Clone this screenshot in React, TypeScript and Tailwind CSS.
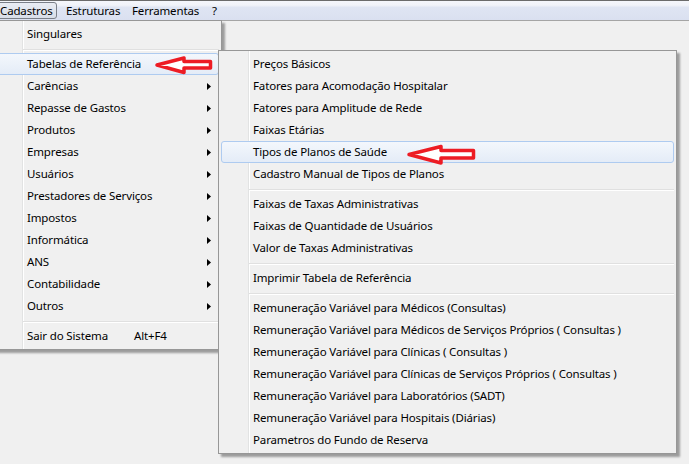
import React from 'react';

type Item = { label?: string; sep?: boolean; sub?: boolean; shortcut?: string; hi?: boolean };

const mainItems: Item[] = [
  { label: 'Singulares' },
  { sep: true },
  { label: 'Tabelas de Referência', sub: true, hi: true },
  { label: 'Carências', sub: true },
  { label: 'Repasse de Gastos', sub: true },
  { label: 'Produtos', sub: true },
  { label: 'Empresas', sub: true },
  { label: 'Usuários', sub: true },
  { label: 'Prestadores de Serviços', sub: true },
  { label: 'Impostos', sub: true },
  { label: 'Informática', sub: true },
  { label: 'ANS', sub: true },
  { label: 'Contabilidade', sub: true },
  { label: 'Outros', sub: true },
  { sep: true },
  { label: 'Sair do Sistema', shortcut: 'Alt+F4' },
];

const subItems: Item[] = [
  { label: 'Preços Básicos' },
  { label: 'Fatores para Acomodação Hospitalar' },
  { label: 'Fatores para Amplitude de Rede' },
  { label: 'Faixas Etárias' },
  { label: 'Tipos de Planos de Saúde', hi: true },
  { label: 'Cadastro Manual de Tipos de Planos' },
  { sep: true },
  { label: 'Faixas de Taxas Administrativas' },
  { label: 'Faixas de Quantidade de Usuários' },
  { label: 'Valor de Taxas Administrativas' },
  { sep: true },
  { label: 'Imprimir Tabela de Referência' },
  { sep: true },
  { label: 'Remuneração Variável para Médicos (Consultas)' },
  { label: 'Remuneração Variável para Médicos de Serviços Próprios ( Consultas )' },
  { label: 'Remuneração Variável para Clínicas ( Consultas )' },
  { label: 'Remuneração Variável para Clínicas de Serviços Próprios ( Consultas )' },
  { label: 'Remuneração Variável para Laboratórios (SADT)' },
  { label: 'Remuneração Variável para Hospitais (Diárias)' },
  { label: 'Parametros do Fundo de Reserva' },
];

function Row({ item }: { item: Item }) {
  if (item.sep) {
    return (
      <div className="h-[8px] pl-[28px] pt-[4px]">
        <div className="h-[1px] bg-[#e0e0e0]" />
        <div className="h-[1px] bg-white" />
      </div>
    );
  }
  return (
    <div
      className={`h-[22px] flex items-center pl-[31px] pr-[7px] rounded-[3px] border ${
        item.hi
          ? 'border-[#aecbf0] bg-[linear-gradient(to_bottom,#f3f7fc,#e4ecf7)]'
          : 'border-transparent'
      }`}
    >
      {item.shortcut ? (
        <>
          <span className="w-[107px] shrink-0 whitespace-nowrap">{item.label}</span>
          <span className="whitespace-nowrap">{item.shortcut}</span>
        </>
      ) : (
        <span className="whitespace-nowrap">{item.label}</span>
      )}
      {item.sub && (
        <svg className="ml-auto shrink-0" width="4" height="7" viewBox="0 0 4 7">
          <path d="M0 0 L4 3.5 L0 7 Z" fill="#000" />
        </svg>
      )}
    </div>
  );
}

const menuBg =
  'bg-[linear-gradient(to_right,#f0f0f0_29px,#e2e3e3_29px,#e2e3e3_30px,#ffffff_30px,#ffffff_31px,#f0f0f0_31px)]';

export default function App() {
  return (
    <div className="relative w-[689px] h-[464px] overflow-hidden bg-[#f0f0f0] text-black text-[11.5px] tracking-[-0.14px] font-['Noto_Sans',sans-serif]">
      {/* menubar */}
      <div className="h-[21px] border-t border-t-[#6b6b6b] border-b border-b-[#a5a5a5] bg-[linear-gradient(to_bottom,#f4f6fb_0%,#f1f3f9_22%,#dfe5f3_34%,#dae0f0_100%)]">
        <div className="flex h-[19px] items-center ml-[-8px]">
          <div className="w-[65px] h-[17px] pl-[7px] flex items-center rounded-[3px] border border-[#7a7f88] bg-[linear-gradient(to_bottom,#e9ecf3,#d8dee9)]">
            Cadastros
          </div>
          <div className="w-[67px] pl-[9px] flex items-center">Estruturas</div>
          <div className="w-[79px] pl-[8px] flex items-center">Ferramentas</div>
          <div className="pl-[9px] flex items-center">?</div>
        </div>
      </div>

      {/* Cadastros dropdown */}
      <div
        className={`absolute left-[-8px] top-[20px] w-[230px] border border-[#979797] px-[2px] py-[2px] shadow-[3px_3px_2px_rgba(0,0,0,0.35)] ${menuBg}`}
      >
        {mainItems.map((it, i) => (
          <Row key={i} item={it} />
        ))}
      </div>

      {/* Tabelas de Referência submenu */}
      <div
        className={`absolute left-[218px] top-[50px] w-[459px] border border-[#979797] px-[2px] py-[2px] shadow-[3px_3px_2px_rgba(0,0,0,0.35)] ${menuBg}`}
      >
        {subItems.map((it, i) => (
          <Row key={i} item={it} />
        ))}
      </div>

      {/* red annotation arrows */}
      <svg className="absolute left-0 top-0 pointer-events-none" width="689" height="464" viewBox="0 0 689 464">
        <polygon
          points="157,65 184,58 184,61.5 210.5,61.5 210.5,68 184,68 184,72.5"
          fill="#ffffff"
          stroke="#ed1c24"
          strokeWidth="3.5"
          strokeLinejoin="round"
        />
        <polygon
          points="409,154.5 441,146.5 441,150.5 473.5,150.5 473.5,158 441,158 441,163"
          fill="#ffffff"
          stroke="#ed1c24"
          strokeWidth="3.5"
          strokeLinejoin="round"
        />
      </svg>
    </div>
  );
}
